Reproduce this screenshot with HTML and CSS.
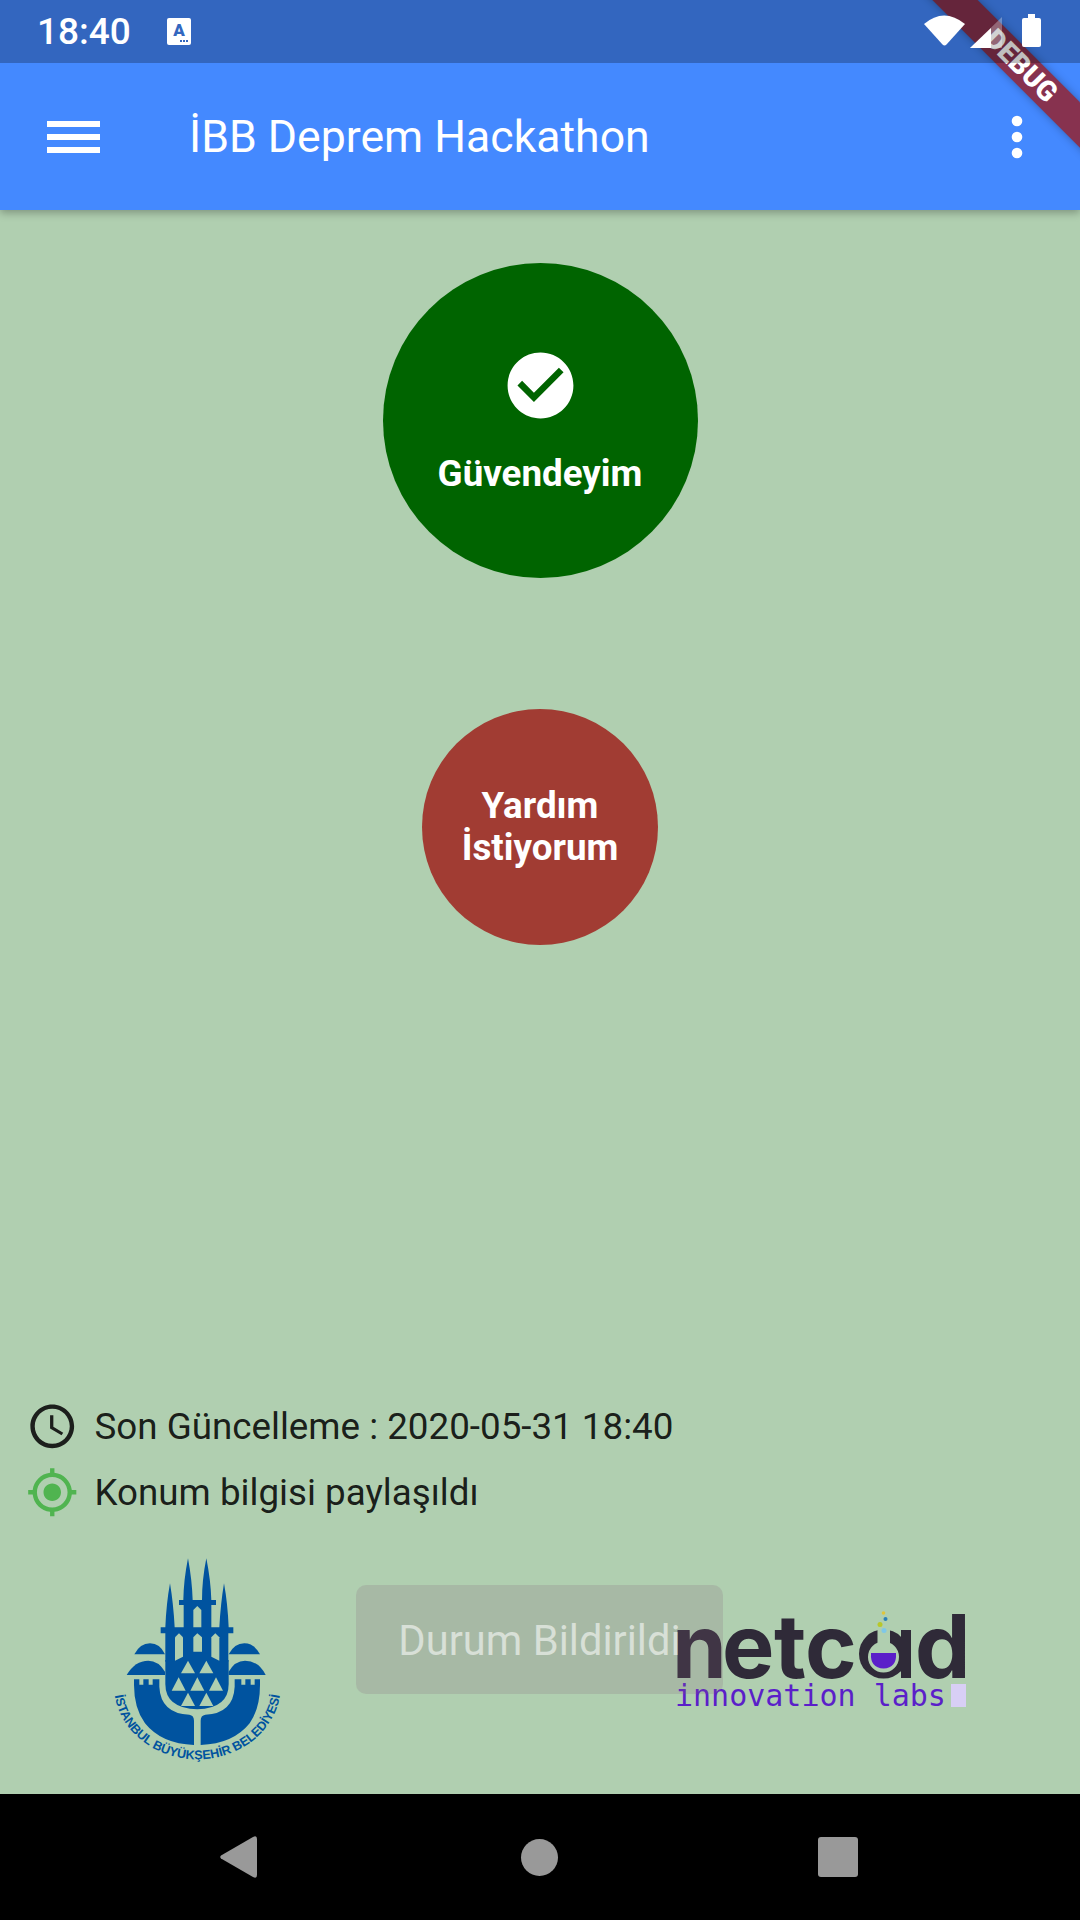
FILE: index.html
```html
<!DOCTYPE html>
<html lang="tr">
<head>
<meta charset="utf-8">
<title>İBB Deprem Hackathon</title>
<link rel="stylesheet" href="styles.css">
</head>
<body>
<div class="screen">
  <div class="app-bar">
    <svg class="menu" viewBox="0 0 53 32"><rect width="53" height="6" fill="#fff"/><rect y="13" width="53" height="6" fill="#fff"/><rect y="26" width="53" height="6" fill="#fff"/></svg>
    <h1 class="title">İBB Deprem Hackathon</h1>
    <svg class="more" viewBox="0 0 12 44"><circle cx="6" cy="6" r="5.300" fill="#fff"/><circle cx="6" cy="22" r="5.300" fill="#fff"/><circle cx="6" cy="38" r="5.300" fill="#fff"/></svg>
  </div>

  <main class="content">
    <button class="round safe">
      <svg class="check" viewBox="0 0 24 24"><path fill="#fff" d="M12 2C6.480 2 2 6.480 2 12s4.480 10 10 10 10-4.480 10-10S17.520 2 12 2zm-2 15l-5-5 1.410-1.410L10 14.170l7.590-7.590L19 8l-9 9z"/></svg>
      <span>Güvendeyim</span>
    </button>
    <button class="round help"><span>Yardım<br>İstiyorum</span></button>

    <section class="footer">
      <div class="info">
        <svg class="info-icon" viewBox="0 0 24 24"><path fill="#1c1f1c" d="M11.990 2C6.470 2 2 6.480 2 12s4.470 10 9.990 10C17.520 22 22 17.520 22 12S17.520 2 11.990 2zM12 20c-4.420 0-8-3.580-8-8s3.580-8 8-8 8 3.580 8 8-3.580 8-8 8z"/><path fill="#1c1f1c" d="M12.500 7H11v6l5.250 3.150.75-1.230-4.500-2.670z"/></svg>
        <span>Son Güncelleme : 2020-05-31 18:40</span>
      </div>
      <div class="info">
        <svg class="info-icon" viewBox="0 0 24 24"><path fill="#50b450" d="M12 8c-2.210 0-4 1.790-4 4s1.790 4 4 4 4-1.790 4-4-1.790-4-4-4zm8.940 3c-.46-4.170-3.770-7.480-7.940-7.940V1h-2v2.060C6.830 3.520 3.520 6.830 3.060 11H1v2h2.060c.46 4.170 3.770 7.480 7.940 7.940V23h2v-2.060c4.170-.46 7.480-3.770 7.940-7.940H23v-2h-2.060zM12 19c-3.870 0-7-3.130-7-7s3.130-7 7-7 7 3.130 7 7-3.130 7-7 7z"/></svg>
        <span>Konum bilgisi paylaşıldı</span>
      </div>

      <div class="logos">
        <svg class="ibb" viewBox="0 0 660 720">
          <g fill="#00539f">
            <path d="M294 55Q281 120 280 180H267V195H281V262H254Q250 190 240 130Q229 190 226 262H212V280H226V365H415V280H430V262H416Q413 190 402 130Q392 190 388 262H364V195H378V180H364Q362 120 349 55Q336 120 336 180H308Q306 120 294 55Z"/>
            <path d="M226 360H416V432Q416 505 322 508Q226 505 226 432Z"/>
            <path d="M133 343Q150 310 180 310Q210 310 225 343Z"/>
            <path d="M110 405Q135 362 175 362Q205 362 225 395V405Z"/>
            <path d="M510 343Q493 310 463 310Q433 310 416 343Z"/>
            <path d="M527 405Q505 362 465 362Q435 362 416 395V405Z"/>
            <path d="M132 418H148V434H160V418H176V434H188V418H208V440Q212 520 298 524Q312 526 312 542V615Q215 612 165 550Q132 505 132 435Z"/>
            <path d="M510 418H494V434H482V418H466V434H454V418H434V440Q430 520 346 524Q332 526 332 542V615Q429 612 479 550Q510 505 510 435Z"/>
          </g>
          <g fill="#b0cfb0">
            <path d="M322 198L334 210V262H310V210Z"/>
            <path d="M267 280L279 292V350L255 362V292Z"/>
            <path d="M322 280L336 292V335H310V292Z"/>
            <path d="M376 280L388 292V362L364 350V292Z"/>
            <path d="M294 362L315 400H273Z"/>
            <path d="M349 362L370 400H328Z"/>
            <path d="M266 412L287 452H245Z"/>
            <path d="M322 412L343 452H301Z"/>
            <path d="M378 412L399 452H357Z"/>
            <path d="M294 458L315 498H273Z"/>
            <path d="M349 458L370 498H328Z"/>
          </g>
          <path id="ibb-arc" d="M72 436A250 222 0 0 0 572 436" fill="none"/>
          <text class="ibb-text"><textPath href="#ibb-arc" startOffset="50%" text-anchor="middle">İSTANBUL BÜYÜKŞEHİR BELEDİYESİ</textPath></text>
        </svg>

        <button class="report">Durum Bildirildi</button>

        <svg class="netcad" viewBox="0 0 296 100">
          <text class="nc-word" x="-3 47 99 130 240" y="66">netcd</text>
          <circle cx="208.500" cy="42" r="24.500" fill="#2f2a38"/>
          <rect x="226" y="18" width="10" height="48" fill="#2f2a38"/>
          <circle cx="208.500" cy="45" r="15.500" fill="#b0cfb0"/>
          <rect x="202.500" y="12" width="12.500" height="24" fill="#b0cfb0"/>
          <path d="M196 41H221Q222 56 208.500 56.500Q195 56 196 41Z" fill="#5b1fc9"/>
          <circle cx="208.500" cy="1" r="1.800" fill="#e0c53a"/>
          <circle cx="210.500" cy="7" r="2" fill="#2a7fb8"/>
          <circle cx="205" cy="12.500" r="2.500" fill="#b8c82a"/>
          <circle cx="209" cy="18.500" r="2.500" fill="#7ec8e8"/>
          <text class="nc-sub" x="0" y="94">innovation labs</text>
          <rect x="276" y="72" width="15" height="23" fill="#d8cff5"/>
        </svg>
      </div>
    </section>
  </main>

  <nav class="nav-bar">
    <svg class="nav-back" viewBox="0 0 37 42"><path d="M1 19.500L33 1Q37-1 37 3V39Q37 43 33 41L1 22.500Q-.5 21 1 19.500Z" fill="#999"/></svg>
    <span class="nav-home"></span>
    <span class="nav-recent"></span>
  </nav>

  <div class="debug-banner">DEBUG</div>

  <header class="status-bar">
    <span class="clock">18:40</span>
    <svg class="a-icon" viewBox="0 0 24 27"><rect width="24" height="27" rx="2" fill="#fff"/><text x="12" y="18" text-anchor="middle" class="a-letter">A</text><rect x="13" y="22" width="2" height="2" fill="#3367bf"/><rect x="16" y="22" width="2" height="2" fill="#3367bf"/><rect x="19" y="22" width="2" height="2" fill="#3367bf"/></svg>
    <svg class="wifi" viewBox="0 0 41 32"><path d="M0 10Q20-7 41 10L22.500 30.500Q20.500 32.500 18.500 30.500Z" fill="#fff"/></svg>
    <svg class="signal" viewBox="0 0 32 31"><path d="M0 31L32 0V31Z" fill="#fff" opacity=".3"/><path d="M0 31L21 11V31Z" fill="#fff"/></svg>
    <svg class="battery" viewBox="0 0 19 33"><path d="M6 0h7v4h4q2 0 2 2v25q0 2-2 2H2q-2 0-2-2V6q0-2 2-2h4Z" fill="#fff"/></svg>
  </header>
</div>
</body>
</html>
```
FILE: styles.css
```css
* { box-sizing: border-box; }
html, body { margin: 0; padding: 0; }
body { width: 1080px; height: 1920px; overflow: hidden; font-family: Roboto, "Noto Sans", sans-serif; }
.screen { position: relative; width: 1080px; height: 1920px; display: flex; flex-direction: column; overflow: hidden; background: #b0cfb0; }

.status-bar { position: absolute; z-index: 6; left: 0; top: 0; width: 100%; height: 63px; background: rgba(0,0,0,.25); display: flex; align-items: center; padding-left: 37px; color: #fff; }
.clock { font-size: 37px; line-height: 63px; font-weight: 500; }
.a-icon { width: 24px; height: 27px; margin-left: 36px; }
.a-letter { font: 900 17px Roboto, sans-serif; fill: #3367bf; }
.wifi { width: 41px; height: 32px; margin-left: auto; margin-bottom: 3px; }
.signal { width: 32px; height: 31px; margin-left: 5px; margin-bottom: -1px; }
.battery { width: 19px; height: 33px; margin-left: 20px; margin-right: 39px; margin-bottom: 2px; }

.app-bar { position: relative; z-index: 2; height: 210px; padding: 63px 57px 0 47px; background: #4489ff; display: flex; align-items: center; box-shadow: 0 3px 8px rgba(0,0,0,.28); flex: none; }
.menu { width: 53px; height: 32px; }
.title { margin: 0 0 0 89px; color: #fff; font-size: 44.600px; font-weight: 400; }
.more { width: 12px; height: 44px; margin-left: auto; }

.content { flex: 1; display: flex; flex-direction: column; align-items: center; min-height: 0; }
.round { border: 0; border-radius: 50%; color: #fff; font: 700 36.750px/42px Roboto, sans-serif; display: flex; flex-direction: column; align-items: center; justify-content: center; padding: 0; flex: none; }
.safe { width: 315px; height: 315px; margin-top: 53px; background: #006400; }
.check { width: 79px; height: 79px; margin-bottom: 28px; }
.help { width: 236px; height: 236px; margin-top: 131px; background: #a13c33; }

.footer { margin-top: auto; width: 100%; padding-bottom: 14px; }
.info { display: flex; align-items: center; gap: 16px; padding-left: 26px; margin-bottom: 13.700px; font-size: 36.750px; color: rgba(0,0,0,.87); height: 52.500px; }
.info-icon { width: 52.500px; height: 52.500px; flex: none; }

.logos { display: flex; align-items: flex-start; margin-top: 21.400px; padding-left: 90px; }
.ibb { width: 220px; height: 240px; flex: none; }
.report { position: relative; z-index: 1; width: 367px; height: 109px; margin: 45px 0 0 46px; border: 0; border-radius: 10px; background: rgba(136,102,126,.2); color: rgba(255,255,255,.56); font: 400 41.700px Roboto, sans-serif; flex: none; padding: 2px 0 0; }
.netcad { width: 296px; height: 100px; margin: 72px 0 0 -48px; flex: none; overflow: visible; }
.ibb-text { font: 700 38px "Liberation Sans", Arial, sans-serif; fill: #00539f; letter-spacing: -.2px; }
.nc-word { font: 700 88px Inter, sans-serif; fill: #2f2a38; }
.nc-sub { font: 400 30px "DejaVu Sans Mono", monospace; fill: #5b1fc9; }

.nav-bar { height: 126px; background: #000; display: flex; align-items: center; padding-left: 220px; flex: none; }
.nav-back { width: 37px; height: 42px; }
.nav-home { width: 37px; height: 37px; margin-left: 264px; border-radius: 50%; background: #999; }
.nav-recent { width: 40px; height: 40px; margin-left: 260px; border-radius: 3px; background: #999; }

.debug-banner { position: absolute; z-index: 5; left: 821px; top: 50px; width: 400px; height: 32px; transform: rotate(45deg); background: rgba(150,30,40,.82); color: #fff; font: 900 28px/32px Roboto, sans-serif; text-align: center; box-shadow: 0 0 8px rgba(0,0,0,.3); }
```
